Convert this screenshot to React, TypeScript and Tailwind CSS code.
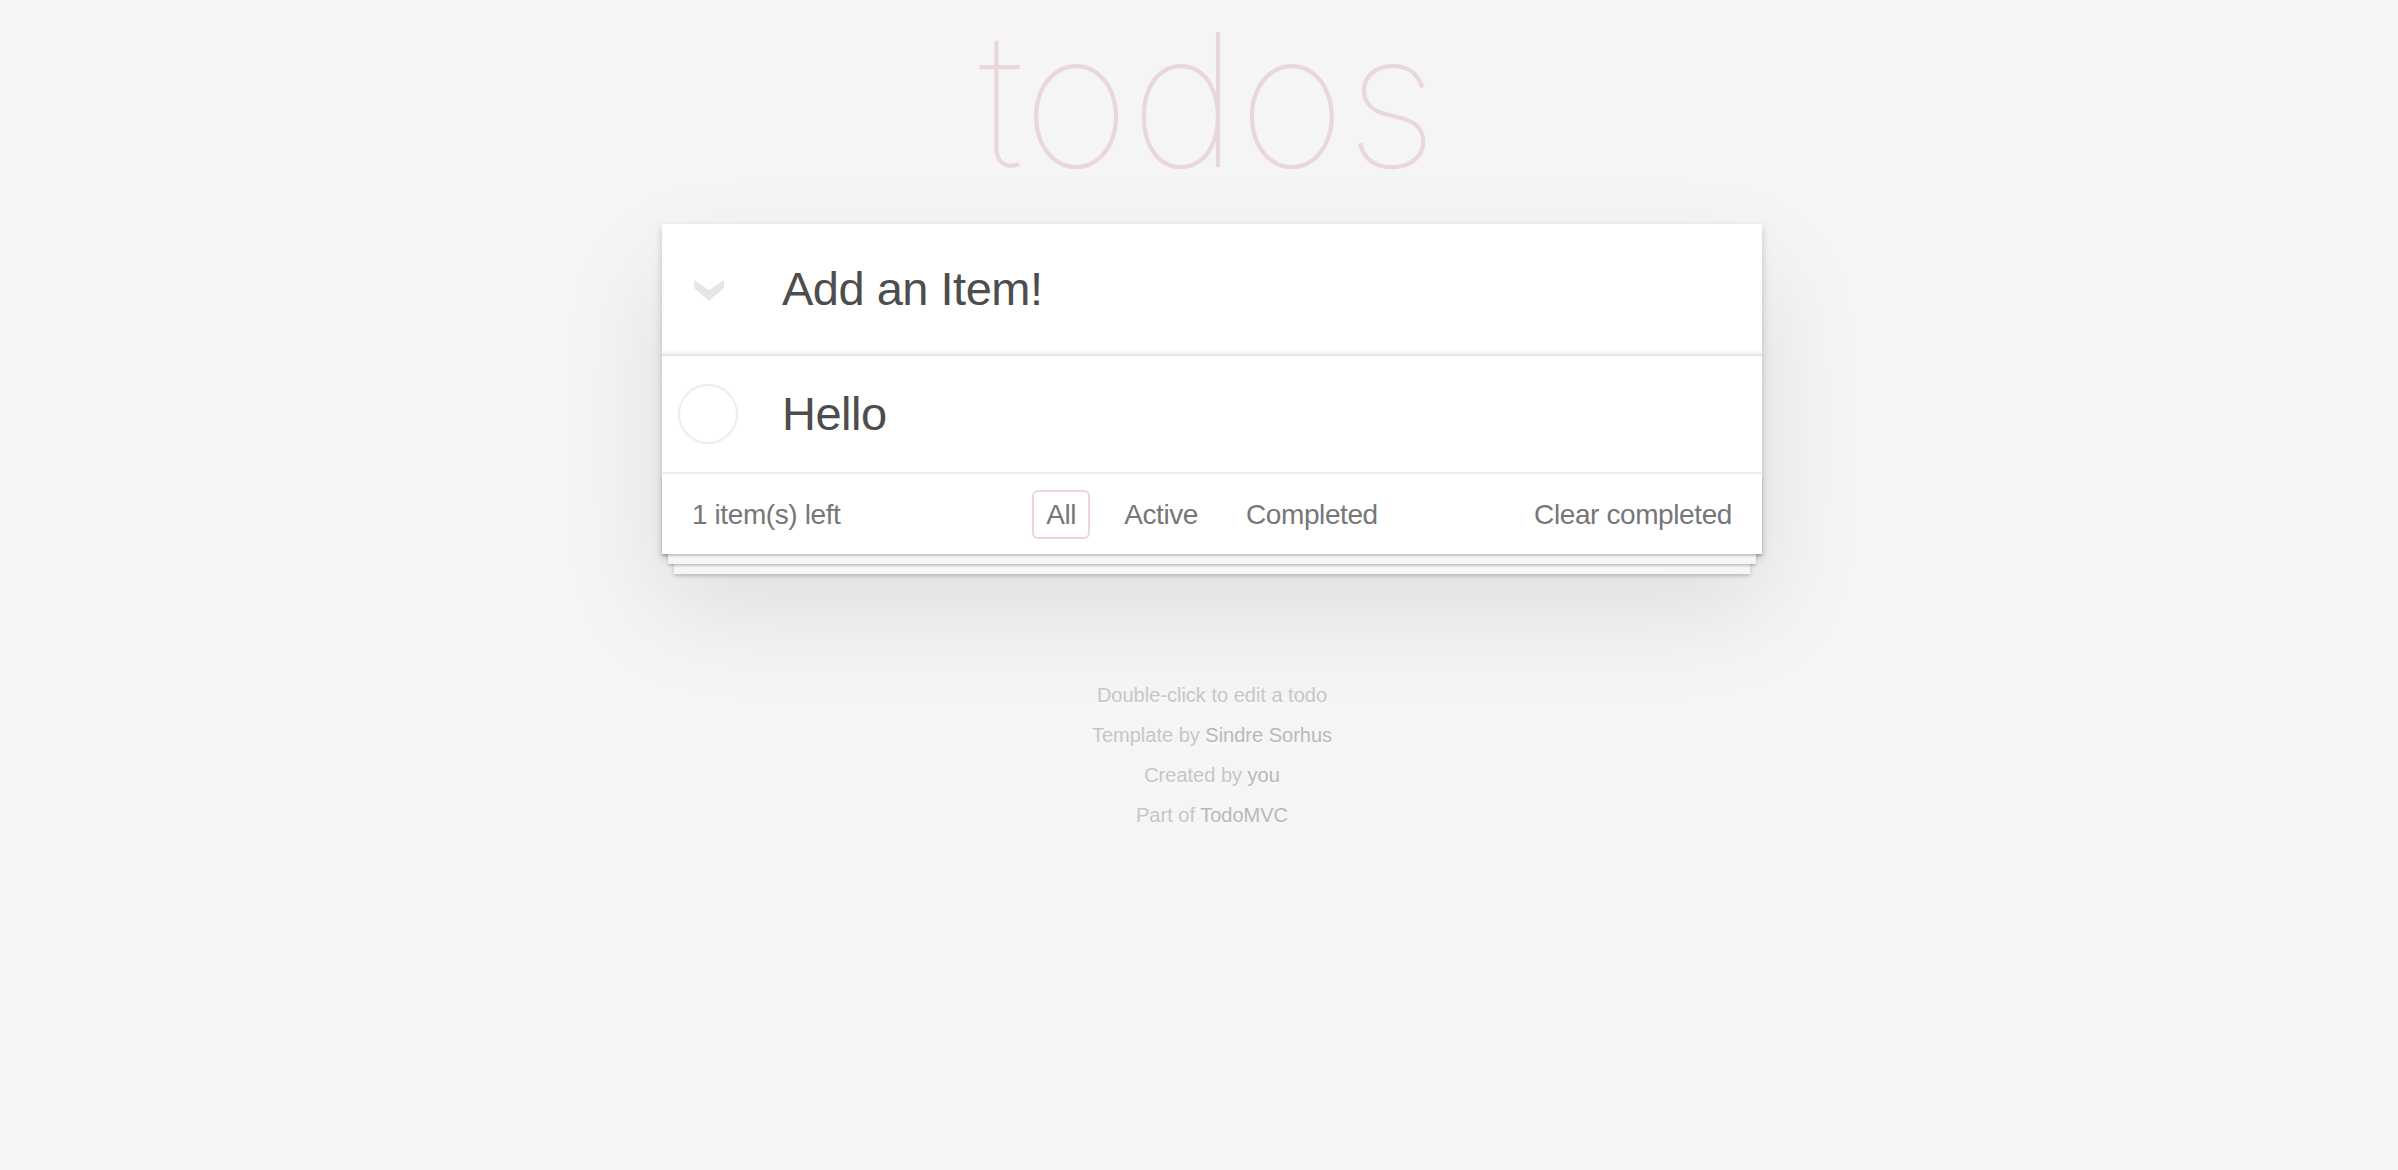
type Filter = {
  label: string;
  selected: boolean;
};

const filters: Filter[] = [
  { label: "All", selected: true },
  { label: "Active", selected: false },
  { label: "Completed", selected: false },
];

const sans = "font-['Liberation_Sans','Helvetica_Neue',Helvetica,Arial,sans-serif]";

function ToggleAll() {
  return (
    <svg width="30" height="22" viewBox="0 0 30 22" className="block">
      <path d="M0 0 L15 10 L30 0 L30 8 L15 21 L0 8 Z" fill="#e6e6e6" />
    </svg>
  );
}

function Circle() {
  return (
    <svg width="60" height="60" viewBox="0 0 60 60" className="block">
      <circle cx="30" cy="30" r="29" fill="none" stroke="#ededed" strokeWidth="2" />
    </svg>
  );
}

export default function App() {
  return (
    <div className={`min-h-screen bg-[#f5f5f5] pl-[26px] ${sans}`}>
      <div className="mx-auto w-[1100px]">
        <h1 className="flex h-[224px] justify-center font-['Inter',sans-serif] text-[186px] font-thin leading-[186px] text-[rgba(175,47,47,0.15)]">
          <span className="relative top-[7px] left-[-4px]">todos</span>
        </h1>

        <section className="bg-white shadow-[0_4px_8px_0_rgba(0,0,0,0.2),0_50px_100px_0_rgba(0,0,0,0.1)]">
          <header className="flex h-[130px] items-center shadow-[inset_0_-4px_2px_rgba(0,0,0,0.03)]">
            <div className="w-[120px] pl-[32px] pt-[4px]">
              <ToggleAll />
            </div>
            <div className="text-[47px] tracking-[-0.5px] text-[#4d4d4d]">Add an Item!</div>
          </header>

          <ul className="border-t-2 border-[#e6e6e6]">
            <li className="flex h-[118px] items-center border-b-2 border-[#ededed]">
              <div className="w-[120px] pl-[16px]">
                <Circle />
              </div>
              <span className="text-[47px] tracking-[-0.5px] text-[#4d4d4d]">Hello</span>
            </li>
          </ul>

          <footer className="grid h-[80px] grid-cols-[1fr_auto_1fr] items-center px-[30px] text-[28px] tracking-[-0.4px] text-[#777] shadow-[0_2px_2px_rgba(0,0,0,0.2),0_16px_0_-6px_#f6f6f6,0_18px_2px_-6px_rgba(0,0,0,0.2),0_32px_0_-12px_#f6f6f6,0_34px_4px_-12px_rgba(0,0,0,0.2)]">
            <span className="pt-[2px]">1 item(s) left</span>
            <ul className="flex gap-[8px]">
              {filters.map((f) => (
                <li key={f.label} className="m-[6px]">
                  <a
                    href="#"
                    className={
                      f.selected
                        ? "block rounded-[6px] border-2 border-[rgba(175,47,47,0.2)] px-[12px] py-[5px] leading-[35px]"
                        : "block rounded-[6px] border-2 border-transparent px-[12px] py-[5px] leading-[35px]"
                    }
                  >
                    {f.label}
                  </a>
                </li>
              ))}
            </ul>
            <span className="justify-self-end pt-[2px]">Clear completed</span>
          </footer>
        </section>

        <div className="mt-[131px] flex flex-col gap-[20px] text-center text-[20px] leading-[20px] text-[#c6c6c6] [text-shadow:0_2px_0_rgba(255,255,255,0.5)]">
          <p>Double-click to edit a todo</p>
          <p>
            Template by <a href="#" className="text-[#b8b8b8]">Sindre Sorhus</a>
          </p>
          <p>
            Created by <a href="#" className="text-[#b8b8b8]">you</a>
          </p>
          <p>
            Part of <a href="#" className="text-[#b8b8b8]">TodoMVC</a>
          </p>
        </div>
      </div>
    </div>
  );
}
